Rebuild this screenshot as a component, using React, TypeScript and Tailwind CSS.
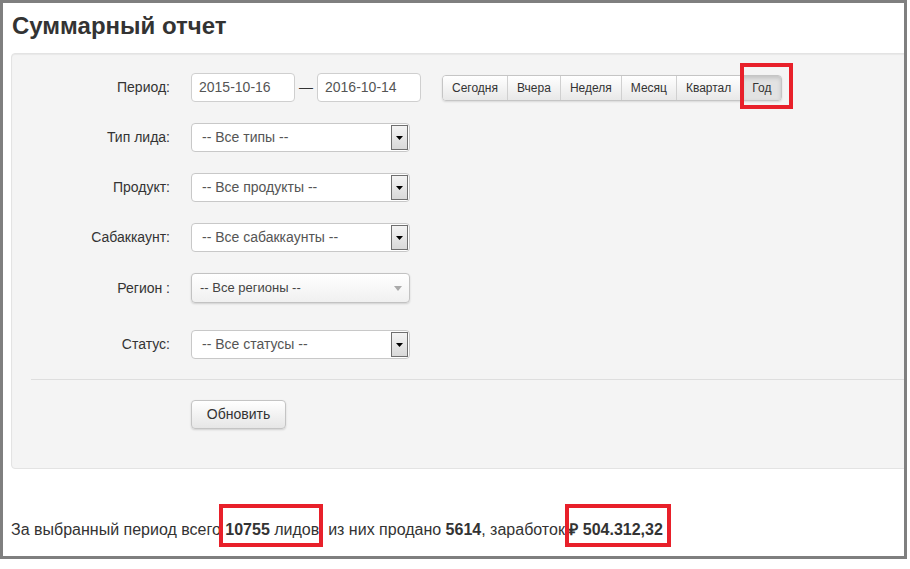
import React from 'react';

const font = { fontFamily: '"Liberation Sans", Arial, sans-serif' };

function Label({ children }: { children: React.ReactNode }) {
  return <div className="w-[158px] shrink-0 text-right text-[14px] text-[#333]">{children}</div>;
}

function OldSelect({ value }: { value: string }) {
  return (
    <div className="ml-[21px] flex h-[29px] w-[219px] items-center rounded-[4px] border border-[#c8c8c8] bg-white pl-[10px] text-[14px] text-[#555]">
      <span className="flex-1">{value}</span>
      <div className="mr-[1px] flex h-[25px] w-[17px] items-center justify-center border border-[#6f6f6f] bg-gradient-to-b from-[#f4f4f4] to-[#d9d9d9]">
        <svg width="7" height="4" viewBox="0 0 7 4">
          <path d="M0 0h7L3.5 4z" fill="#000" />
        </svg>
      </div>
    </div>
  );
}

const ranges = ['Сегодня', 'Вчера', 'Неделя', 'Месяц', 'Квартал', 'Год'];

export default function App() {
  return (
    <div className="h-[569px] w-[910px] bg-white" style={font}>
      <div className="relative h-[559px] w-[907px] overflow-hidden border-[3px] border-[#7f7f7f] bg-white px-[8px]">
        <h1 className="pt-[9px] pl-[1px] text-[24px] font-bold leading-[28px] text-[#333]">Суммарный отчет</h1>

        <div className="mt-[13px] h-[416px] w-[920px] rounded-[4px] border border-[#e3e3e3] bg-[#f4f4f4] pt-[19px] shadow-[inset_0_1px_1px_rgba(0,0,0,0.05)]">
          <div className="flex items-center">
            <Label>Период:</Label>
            <div className="ml-[21px] flex h-[29px] w-[104px] items-center rounded-[4px] border border-[#cfcfcf] bg-white pl-[7px] text-[14px] text-[#555]">
              2015-10-16
            </div>
            <div className="w-[22px] text-center text-[14px] text-[#333]">—</div>
            <div className="flex h-[29px] w-[104px] items-center rounded-[4px] border border-[#cfcfcf] bg-white pl-[7px] text-[14px] text-[#555]">
              2016-10-14
            </div>
            <div className="ml-[21px] flex h-[26px] overflow-hidden rounded-[4px] border border-[#c5c5c5] shadow-[0_1px_2px_rgba(0,0,0,0.12)]">
              {ranges.map((r, i) => (
                <div
                  key={r}
                  className={
                    r === 'Год'
                      ? 'ml-[2px] flex items-center bg-[#e2e2e2] px-[10px] text-[12px] text-[#333] shadow-[inset_0_2px_4px_rgba(0,0,0,0.15)]'
                      : `flex items-center bg-gradient-to-b from-white to-[#e8e8e8] px-[9px] text-[12px] text-[#333] ${i > 0 ? 'border-l border-[#d0d0d0]' : ''}`
                  }
                >
                  {r}
                </div>
              ))}
            </div>
          </div>

          <div className="mt-[21px] flex items-center">
            <Label>Тип лида:</Label>
            <OldSelect value="-- Все типы --" />
          </div>
          <div className="mt-[21px] flex items-center">
            <Label>Продукт:</Label>
            <OldSelect value="-- Все продукты --" />
          </div>
          <div className="mt-[21px] flex items-center">
            <Label>Сабаккаунт:</Label>
            <OldSelect value="-- Все сабаккаунты --" />
          </div>
          <div className="mt-[21px] flex items-center">
            <Label>Регион :</Label>
            <div className="ml-[21px] flex h-[30px] w-[219px] items-center rounded-[4px] border border-[#c2c2c2] bg-gradient-to-b from-white to-[#f0f0f0] pl-[8px] pr-[7px] text-[13px] text-[#444] shadow-[0_1px_2px_rgba(0,0,0,0.15)]">
              <span className="flex-1">-- Все регионы --</span>
              <svg width="8" height="5" viewBox="0 0 8 5">
                <path d="M0 0h8L4 5z" fill="#aaa" />
              </svg>
            </div>
          </div>
          <div className="mt-[27px] flex items-center">
            <Label>Статус:</Label>
            <OldSelect value="-- Все статусы --" />
          </div>

          <div className="ml-[19px] mt-[20px] border-t border-[#dedede]" />

          <div className="ml-[179px] mt-[20px] flex h-[29px] w-[95px] items-center justify-center rounded-[4px] border border-[#c4c4c4] bg-gradient-to-b from-white to-[#e6e6e6] text-[14px] text-[#333] shadow-[0_1px_2px_rgba(0,0,0,0.15)]">
            Обновить
          </div>
        </div>

        <p className="mt-[51px] text-[16px] leading-[20px] text-[#333]">
          За выбранный период всего <b>10755</b> лидов, из них продано <b>5614</b>, заработок <b>₽ 504.312,32</b>
        </p>

        <div className="absolute left-[737px] top-[60px] h-[46px] w-[53px] border-[4px] border-[#e8202a]" />
        <div className="absolute left-[216px] top-[501px] h-[43px] w-[104px] border-[4px] border-[#e8202a]" />
        <div className="absolute left-[562px] top-[501px] h-[43px] w-[106px] border-[4px] border-[#e8202a]" />
      </div>
    </div>
  );
}
